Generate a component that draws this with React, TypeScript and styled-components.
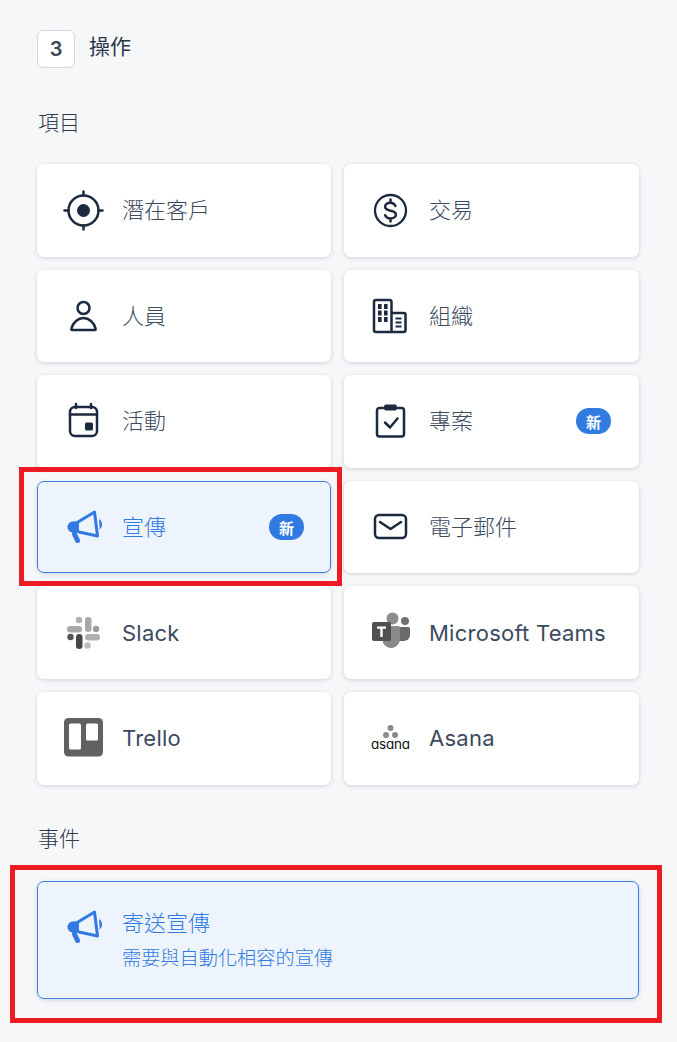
import React from 'react';
import styled, { createGlobalStyle } from 'styled-components';

const GlobalStyle = createGlobalStyle`
  html, body {
    margin: 0;
    background: #f6f7f9;
  }
  body {
    font-family: 'Inter', 'Noto Sans CJK TC', sans-serif;
  }
`;

const Page = styled.div`
  box-sizing: border-box;
  width: 677px;
  height: 1042px;
  padding: 30px 38px 0 37px;
  overflow: hidden;
`;

const StepHeader = styled.div`
  display: flex;
  align-items: center;
  gap: 14px;
  height: 38px;
`;

const StepNumber = styled.div`
  box-sizing: border-box;
  width: 38px;
  height: 38px;
  display: flex;
  align-items: center;
  justify-content: center;
  background: #fff;
  border: 1px solid #d3d6dc;
  border-radius: 6px;
  color: #39465a;
  font-size: 20px;
  font-weight: 600;
`;

const StepTitle = styled.div`
  font-size: 21px;
  line-height: 34px;
  margin-bottom: 4px;
  font-weight: 400;
  color: #2b3648;
`;

const SectionLabel = styled.div<{ $top: number; $bottom: number }>`
  margin: ${(p) => p.$top}px 0 ${(p) => p.$bottom}px 1px;
  height: 30px;
  line-height: 30px;
  font-size: 21px;
  font-weight: 300;
  color: #2f3a4c;
`;

const Card = styled.div<{ $active?: boolean; $tall?: boolean }>`
  position: relative;
  box-sizing: border-box;
  display: flex;
  align-items: ${(p) => (p.$tall ? 'flex-start' : 'center')};
  gap: 18px;
  height: ${(p) => (p.$tall ? '118px' : 'auto')};
  padding: ${(p) => (p.$tall ? '26px 27px 0' : '0 27px')};
  background: ${(p) => (p.$active ? '#edf4fd' : '#fff')};
  border-radius: 7px;
  box-shadow: 0 1px 4px rgba(30, 40, 60, 0.18);
  outline: ${(p) => (p.$active ? '1px solid #3b7fe0' : 'none')};
  outline-offset: -1px;
  color: ${(p) => (p.$active ? '#317ae2' : '#3c4a5e')};
`;

const Grid = styled.div`
  display: grid;
  grid-template-columns: 294px 295px;
  grid-auto-rows: 92.6px;
  gap: 13px;

  /* the right column is a pixel wider, its icons sit a pixel further left */
  > ${Card}:nth-child(even) {
    padding: 0 28px 0 26px;
    gap: 19px;
  }
`;

const IconBox = styled.div`
  flex: 0 0 40px;
  width: 40px;
  height: 40px;
  svg {
    display: block;
    overflow: visible;
  }
  text {
    font-feature-settings: 'cv11' 1;
  }
`;

const Label = styled.div<{ $latin?: boolean }>`
  flex: 1;
  font-size: 22px;
  font-weight: ${(p) => (p.$latin ? 400 : 300)};
  letter-spacing: ${(p) => (p.$latin ? '0.25px' : '0')};
  line-height: 32px;
  white-space: nowrap;
`;

const TextStack = styled.div`
  display: flex;
  flex-direction: column;
  gap: 3px;
`;

const SubLabel = styled.div`
  font-size: 19.2px;
  font-weight: 300;
  line-height: 32px;
  white-space: nowrap;
`;

const Badge = styled.div`
  flex: 0 0 35px;
  height: 26px;
  display: flex;
  align-items: center;
  justify-content: center;
  border-radius: 13px;
  background: #317ae2;
  color: #fff;
  font-size: 15px;
  font-weight: 700;
`;

// red annotation frames drawn on top of the screenshot
const Highlight = styled.div<{ $inset: string }>`
  position: absolute;
  inset: ${(p) => p.$inset};
  border: 5px solid #ed1c24;
  pointer-events: none;
`;

const ink = '#1b2a3e';
const blue = '#317ae2';

const Svg = ({ children, color = ink }: { children: React.ReactNode; color?: string }) => (
  <svg width="40" height="40" viewBox="0 0 40 40" fill="none" stroke={color} strokeWidth="2.5" strokeLinecap="round" strokeLinejoin="round">
    {children}
  </svg>
);

const TargetIcon = () => (
  <Svg>
    <circle cx="19.5" cy="20.5" r="15" />
    <circle cx="19.5" cy="20.5" r="6.5" fill={ink} stroke="none" />
    <path d="M19.5 1.5v4M19.5 35.5v4M0.5 20.5h4M34.5 20.5h4" />
  </Svg>
);

const DollarIcon = () => (
  <Svg>
    <circle cx="20.5" cy="20.5" r="15.5" strokeWidth="2.3" />
    <path d="M25.5 16c-1-2-3-3.2-5-3.2-3 0-5.4 1.5-5.4 4 0 5.4 10.8 2.6 10.8 7.6 0 2.5-2.4 4-5.4 4-2.4 0-4.4-1.2-5.4-3.2M20.5 9.5v3.2M20.5 28.4v3" />
  </Svg>
);

const PersonIcon = () => (
  <Svg>
    <circle cx="19.5" cy="12" r="6" />
    <path d="M8 34a1 1 0 0 1-.6-1.4C9 26.500 14 22 19.5 22S30 26.500 31.600 32.600A1 1 0 0 1 31 34z" />
  </Svg>
);

const BuildingIcon = () => (
  <Svg>
    <path d="M21.5 36H6a2 2 0 0 1-2-2V6a2 2 0 0 1 2-2h13.500a2 2 0 0 1 2 2zM21.500 17H34a1.500 1.500 0 0 1 1.500 1.500V34a2 2 0 0 1-2 2h-12" />
    <g fill={ink} stroke="none">
      {[8, 14.5, 21].map((y) =>
        [8, 14].map((x) => <rect key={`${x}-${y}`} x={x} y={y} width="3.6" height="5" />),
      )}
    </g>
    <path d="M25.500 22.500h6M25.500 26.500h6M25.500 30.500h6" strokeWidth="2" strokeLinecap="butt" />
  </Svg>
);

const CalendarIcon = () => (
  <Svg>
    <rect x="6" y="6" width="27" height="29" rx="5" />
    <path d="M6 13.500h27M12 3v4M27 3v4" />
    <rect x="21" y="21.500" width="8" height="8" rx="1.500" fill={ink} stroke="none" />
  </Svg>
);

const ClipboardIcon = () => (
  <Svg>
    <path d="M13 7H9.500A2.500 2.500 0 0 0 7 9.500V33a2.500 2.500 0 0 0 2.500 2.500h22A2.500 2.500 0 0 0 34 33V9.500A2.500 2.500 0 0 0 31.500 7H28" />
    <rect x="14" y="3.500" width="13" height="6" rx="2" fill={ink} stroke="none" />
    <path d="M15 21.500l5 5 7.500-9" />
  </Svg>
);

const MailIcon = () => (
  <Svg>
    <rect x="5" y="8" width="31" height="23" rx="4" />
    <path d="M10 15l10.500 7L31 15" />
  </Svg>
);

const MegaphoneIcon = () => (
  <Svg color={blue}>
    <path d="M14 15L30.500 5l3 24-18.500-4" strokeWidth="3" />
    <path d="M15 14v12l-6.500-.5A5.400 5.400 0 0 1 3.500 20 5.400 5.400 0 0 1 8.500 14.500z" fill={blue} stroke="none" />
    <path d="M10.500 27l3 6.500" strokeWidth="5" />
    <path d="M35 12c1.800 1 3 3.200 3 5.500s-1 4-2.200 5z" fill={blue} stroke="none" />
  </Svg>
);

const SlackIcon = () => (
  <Svg>
    <g stroke="none">
      <rect x="21" y="4" width="6.500" height="15" rx="3.250" fill="#a8a8a8" />
      <circle cx="15" cy="7" r="3.200" fill="#b0b0b0" />
      <rect x="3" y="13" width="15" height="6.500" rx="3.250" fill="#a8a8a8" />
      <circle cx="32" cy="16" r="3.200" fill="#9c9c9c" />
      <rect x="21" y="21" width="15" height="6.500" rx="3.250" fill="#b0b0b0" />
      <circle cx="23.500" cy="32.500" r="3.200" fill="#bdbdbd" />
      <rect x="12" y="21" width="6.500" height="15" rx="3.250" fill="#474747" />
      <circle cx="6.500" cy="24" r="3.200" fill="#555" />
    </g>
  </Svg>
);

const TeamsIcon = () => (
  <Svg>
    <g stroke="none">
      <path d="M28 14h10.500a1.500 1.500 0 0 1 1.500 1.500V22a6 6 0 0 1-6 6h-6z" fill="#6a6a6a" />
      <circle cx="35" cy="8" r="4" fill="#707070" />
      <path d="M13 13h15a2 2 0 0 1 2 2v11a9 9 0 0 1-17 4z" fill="#8a8a8a" />
      <circle cx="22.500" cy="5.500" r="6" fill="#8c8c8c" />
      <rect x="2" y="9" width="19" height="19" rx="2" fill="#505050" />
      <path d="M7 13.500h9v2.200h-3.300V24h-2.400v-8.300H7z" fill="#fff" />
    </g>
  </Svg>
);

const TrelloIcon = () => (
  <Svg>
    <g stroke="none">
      <rect x="0" y="0" width="39" height="38.500" rx="4.500" fill="#616161" />
      <rect x="5" y="5.500" width="12" height="26" rx="1.500" fill="#fff" />
      <rect x="22" y="5.500" width="12" height="17" rx="1.500" fill="#fff" />
    </g>
  </Svg>
);

const AsanaIcon = () => (
  <Svg>
    <g stroke="none" fill="#8a8a8a">
      <circle cx="20.500" cy="10" r="3" />
      <circle cx="16" cy="17" r="3" />
      <circle cx="25" cy="17" r="3" />
    </g>
    <text x="1" y="31" fontFamily="Inter, sans-serif" fontSize="13.5" fill="#111" stroke="none" textLength="39">
      asana
    </text>
  </Svg>
);

const items = [
  { label: '潛在客戶', icon: <TargetIcon /> },
  { label: '交易', icon: <DollarIcon /> },
  { label: '人員', icon: <PersonIcon /> },
  { label: '組織', icon: <BuildingIcon /> },
  { label: '活動', icon: <CalendarIcon /> },
  { label: '專案', icon: <ClipboardIcon />, badge: true },
  { label: '宣傳', icon: <MegaphoneIcon />, badge: true, active: true },
  { label: '電子郵件', icon: <MailIcon /> },
  { label: 'Slack', icon: <SlackIcon />, latin: true },
  { label: 'Microsoft Teams', icon: <TeamsIcon />, latin: true },
  { label: 'Trello', icon: <TrelloIcon />, latin: true },
  { label: 'Asana', icon: <AsanaIcon />, latin: true },
];

const App = () => (
  <>
    <GlobalStyle />
    <Page>
      <StepHeader>
        <StepNumber>3</StepNumber>
        <StepTitle>操作</StepTitle>
      </StepHeader>

      <SectionLabel $top={40} $bottom={26}>項目</SectionLabel>
      <Grid>
        {items.map((item) => (
          <Card key={item.label} $active={item.active}>
            <IconBox>{item.icon}</IconBox>
            <Label $latin={item.latin}>{item.label}</Label>
            {item.badge && <Badge>新</Badge>}
            {item.active && <Highlight $inset="-14px -11px -13px -18px" />}
          </Card>
        ))}
      </Grid>

      <SectionLabel $top={39} $bottom={27}>事件</SectionLabel>
      <Card $active $tall>
        <IconBox><MegaphoneIcon /></IconBox>
        <TextStack>
          <Label>寄送宣傳</Label>
          <SubLabel>需要與自動化相容的宣傳</SubLabel>
        </TextStack>
        <Highlight $inset="-16px -23px -24px -27px" />
      </Card>
    </Page>
  </>
);

export default App;
